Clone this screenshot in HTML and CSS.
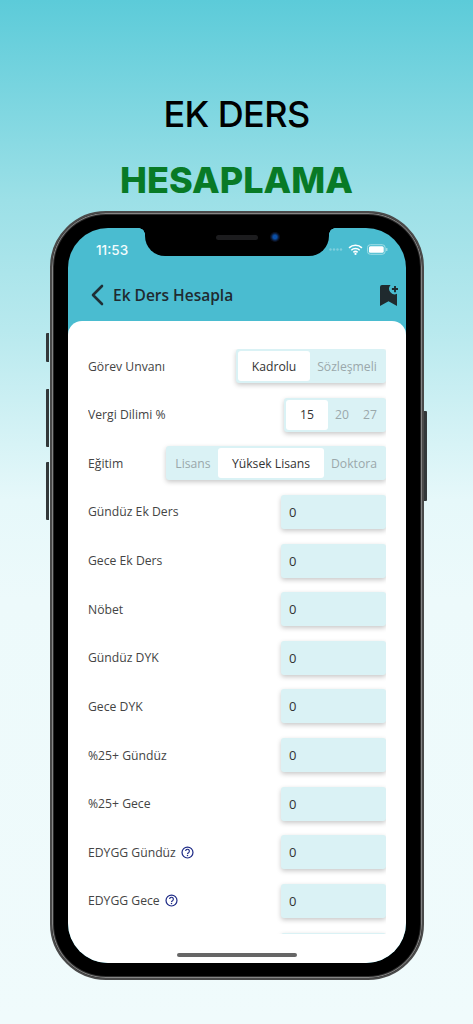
FILE: index.html
```html
<!DOCTYPE html>
<html lang="tr">
<head>
<meta charset="utf-8">
<title>Ek Ders Hesaplama</title>
<link rel="stylesheet" href="styles.css">
</head>
<body>
<header class="promo">
  <h1 class="promo-a">EK DERS</h1>
  <h2 class="promo-b">HESAPLAMA</h2>
</header>
<div class="phone">
  <span class="btn btn-mute"></span>
  <span class="btn btn-up"></span>
  <span class="btn btn-down"></span>
  <span class="btn btn-power"></span>
  <div class="screen">
    <div class="notch">
      <span class="speaker"></span>
      <span class="camera"></span>
    </div>
    <div class="status">
      <span class="time">11:53</span>
      <div class="status-icons">
        <svg class="dots" viewBox="0 0 15 3" width="15" height="3"><g fill="#7fcfdd"><circle cx="1.5" cy="1.5" r="1.2"/><circle cx="5" cy="1.5" r="1.2"/><circle cx="8.5" cy="1.5" r="1.2"/><circle cx="12" cy="1.5" r="1.2"/></g></svg>
        <svg class="wifi" viewBox="0 0 16 12" width="15" height="11"><path d="M1 4.2a10 10 0 0 1 14 0M3.4 6.8a6.6 6.6 0 0 1 9.2 0M5.7 9.2a3.3 3.3 0 0 1 4.6 0" fill="none" stroke="#fff" stroke-width="1.7"/><circle cx="8" cy="10.8" r="1.2" fill="#fff"/></svg>
        <svg class="battery" viewBox="0 0 22 11" width="21" height="11"><rect x=".5" y=".5" width="18.5" height="10" rx="3" fill="none" stroke="#a5dfe8"/><rect x="2" y="2" width="15.5" height="7" rx="1.6" fill="#fff"/><rect x="20" y="3.8" width="1.4" height="3.4" rx=".7" fill="#a5dfe8"/></svg>
      </div>
    </div>
    <div class="navbar">
      <svg class="back" viewBox="0 0 14 22" width="14" height="22"><path d="M12 2 3 11l9 9" fill="none" stroke="#1f2f36" stroke-width="2.6" stroke-linecap="round" stroke-linejoin="round"/></svg>
      <span class="nav-title">Ek Ders Hesapla</span>
      <svg class="mark" viewBox="0 0 18 21" width="18" height="21"><path d="M0 2a2 2 0 0 1 2-2h8.600a5.500 5.500 0 0 0 6.400 8.700V21l-8.500-4.700L0 21z" fill="#1f2a2e"/><path d="M15 1v6.200M11.900 4h6.100" stroke="#1f2a2e" stroke-width="1.900"/></svg>
    </div>
    <main class="card">
      <div class="rows">
        <div class="row">
          <span class="label">Görev Unvanı</span>
          <div class="seg">
            <span class="opt on w72">Kadrolu</span>
            <span class="opt w74">Sözleşmeli</span>
          </div>
        </div>
        <div class="row">
          <span class="label">Vergi Dilimi %</span>
          <div class="seg">
            <span class="opt on w42">15</span>
            <span class="opt w28">20</span>
            <span class="opt w28">27</span>
          </div>
        </div>
        <div class="row">
          <span class="label">Eğitim</span>
          <div class="seg">
            <span class="opt w50">Lisans</span>
            <span class="opt on w106">Yüksek Lisans</span>
            <span class="opt w60">Doktora</span>
          </div>
        </div>
        <div class="row"><span class="label">Gündüz Ek Ders</span><div class="field">0</div></div>
        <div class="row"><span class="label">Gece Ek Ders</span><div class="field">0</div></div>
        <div class="row"><span class="label">Nöbet</span><div class="field">0</div></div>
        <div class="row"><span class="label">Gündüz DYK</span><div class="field">0</div></div>
        <div class="row"><span class="label">Gece DYK</span><div class="field">0</div></div>
        <div class="row"><span class="label">%25+ Gündüz</span><div class="field">0</div></div>
        <div class="row"><span class="label">%25+ Gece</span><div class="field">0</div></div>
        <div class="row">
          <span class="label">EDYGG Gündüz
            <svg class="help" viewBox="0 0 14 14" width="13" height="13"><circle cx="7" cy="7" r="5.900" fill="none" stroke="#1d2a86" stroke-width="1.300"/><path d="M5 5.500a2 2 0 1 1 3.100 1.700c-.8.500-1.100.8-1.100 1.500" fill="none" stroke="#1d2a86" stroke-width="1.200"/><circle cx="7" cy="10.300" r=".8" fill="#1d2a86"/></svg>
          </span>
          <div class="field">0</div>
        </div>
        <div class="row">
          <span class="label">EDYGG Gece
            <svg class="help" viewBox="0 0 14 14" width="13" height="13"><circle cx="7" cy="7" r="5.900" fill="none" stroke="#1d2a86" stroke-width="1.300"/><path d="M5 5.500a2 2 0 1 1 3.100 1.700c-.8.500-1.100.8-1.100 1.500" fill="none" stroke="#1d2a86" stroke-width="1.200"/><circle cx="7" cy="10.300" r=".8" fill="#1d2a86"/></svg>
          </span>
          <div class="field">0</div>
        </div>
        <div class="row"><span class="label"></span><div class="field"></div></div>
      </div>
    </main>
    <div class="home-bar"></div>
  </div>
</div>
</body>
</html>
```

FILE: styles.css
```css
* { box-sizing: border-box; }
html, body { margin: 0; padding: 0; }
body {
  width: 473px;
  height: 1024px;
  overflow: hidden;
  background: linear-gradient(180deg, #5ccbd9 0, #9ce0e7 200px, #b8e9ee 330px, #e6f8fa 500px, #edfafb 600px, #f0fbfc 1024px);
  font-family: "Open Sans", sans-serif;
}
.promo { text-align: center; padding-top: 91px; height: 211px; }
.promo-a {
  margin: 0;
  font: 500 36px/46px Inter, sans-serif;
  letter-spacing: -0.6px;
  color: #000;
}
.promo-b {
  margin: 20px 0 0;
  font: 800 36px/46px Inter, sans-serif;
  color: #087a26;
}
.phone {
  position: relative;
  width: 374px;
  height: 769px;
  margin-left: 50px;
  padding: 15px 16px;
  background: #000;
  border-radius: 56px;
  border: 2px solid #4a4a4a;
  box-shadow: inset 0 0 0 1px #858585, inset 0 0 0 2px #2c2c2c;
}
.btn { position: absolute; width: 3px; background: #33383a; border-radius: 1px 0 0 1px; }
.btn-mute { left: -6px; top: 120px; height: 29px; }
.btn-up { left: -6px; top: 176px; height: 58px; }
.btn-down { left: -6px; top: 249px; height: 58px; }
.btn-power { left: 372px; top: 198px; height: 90px; border-radius: 0 1px 1px 0; }
.screen {
  position: relative;
  width: 338px;
  height: 735px;
  border-radius: 40px;
  overflow: hidden;
  background: #4abcd0;
  display: flex;
  flex-direction: column;
}
.notch {
  position: absolute;
  left: 77px;
  top: 0;
  width: 184px;
  height: 28px;
  background: #000;
  border-radius: 0 0 20px 20px;
}
.notch::before, .notch::after {
  content: "";
  position: absolute;
  top: 0;
  width: 6px;
  height: 6px;
}
.notch::before { left: -6px; background: radial-gradient(circle at 0 100%, transparent 5.500px, #000 6px); }
.notch::after { right: -6px; background: radial-gradient(circle at 100% 100%, transparent 5.500px, #000 6px); }
.speaker { position: absolute; left: 71px; top: 7px; width: 42px; height: 5px; border-radius: 3px; background: #1c1c1e; }
.camera { position: absolute; left: 125px; top: 4px; width: 10px; height: 10px; border-radius: 50%; background: radial-gradient(circle, #0b4fa8 0 25%, #0a1020 60%); }
.status {
  height: 43px;
  padding: 13px 18px 0 28px;
  display: flex;
  justify-content: space-between;
  align-items: flex-start;
  flex: none;
}
.time { font: 500 13.5px/18px Inter, sans-serif; color: #f2fbfc; }
.status-icons { display: flex; align-items: center; gap: 4px; padding-top: 3px; }
.navbar {
  height: 50px;
  flex: none;
  display: flex;
  align-items: center;
  padding: 0 8px 2px 22px;
}
.nav-title { margin-left: 9px; font-size: 15.5px; font-weight: 600; color: #1f2b30; flex: 1; }
.card {
  flex: 1;
  min-height: 0;
  background: #fff;
  border-radius: 14px 14px 0 0;
  padding: 28px 20px 0;
}
.rows {
  height: 585px;
  overflow: hidden;
  display: flex;
  flex-direction: column;
  gap: 14.64px;
}
.row {
  flex: none;
  height: 34px;
  display: flex;
  align-items: center;
  justify-content: space-between;
}
.label { font-size: 12.2px; color: #444; display: flex; align-items: center; gap: 5px; white-space: nowrap; }
.seg {
  display: flex;
  height: 34px;
  padding: 2px;
  background: #daf2f5;
  border-radius: 3px;
  box-shadow: 0 2px 5px rgba(0,0,0,.22);
}
.opt {
  display: flex;
  align-items: center;
  justify-content: center;
  font-size: 12.2px;
  color: #9aa8ab;
  border-radius: 3px;
}
.opt.on { background: #fff; color: #333; }
.w28 { width: 28px; }
.w42 { width: 42px; }
.w50 { width: 50px; }
.w60 { width: 60px; }
.w72 { width: 72px; }
.w74 { width: 74px; }
.w106 { width: 106px; }
.field {
  width: 105px;
  height: 34px;
  padding-left: 8px;
  display: flex;
  align-items: center;
  font-size: 13px;
  color: #333;
  background: #daf2f5;
  border-radius: 3px;
  box-shadow: 0 2px 5px rgba(0,0,0,.22);
}
.home-bar {
  position: absolute;
  left: 109px;
  bottom: 6px;
  width: 120px;
  height: 4px;
  border-radius: 2px;
  background: #666;
}
```
